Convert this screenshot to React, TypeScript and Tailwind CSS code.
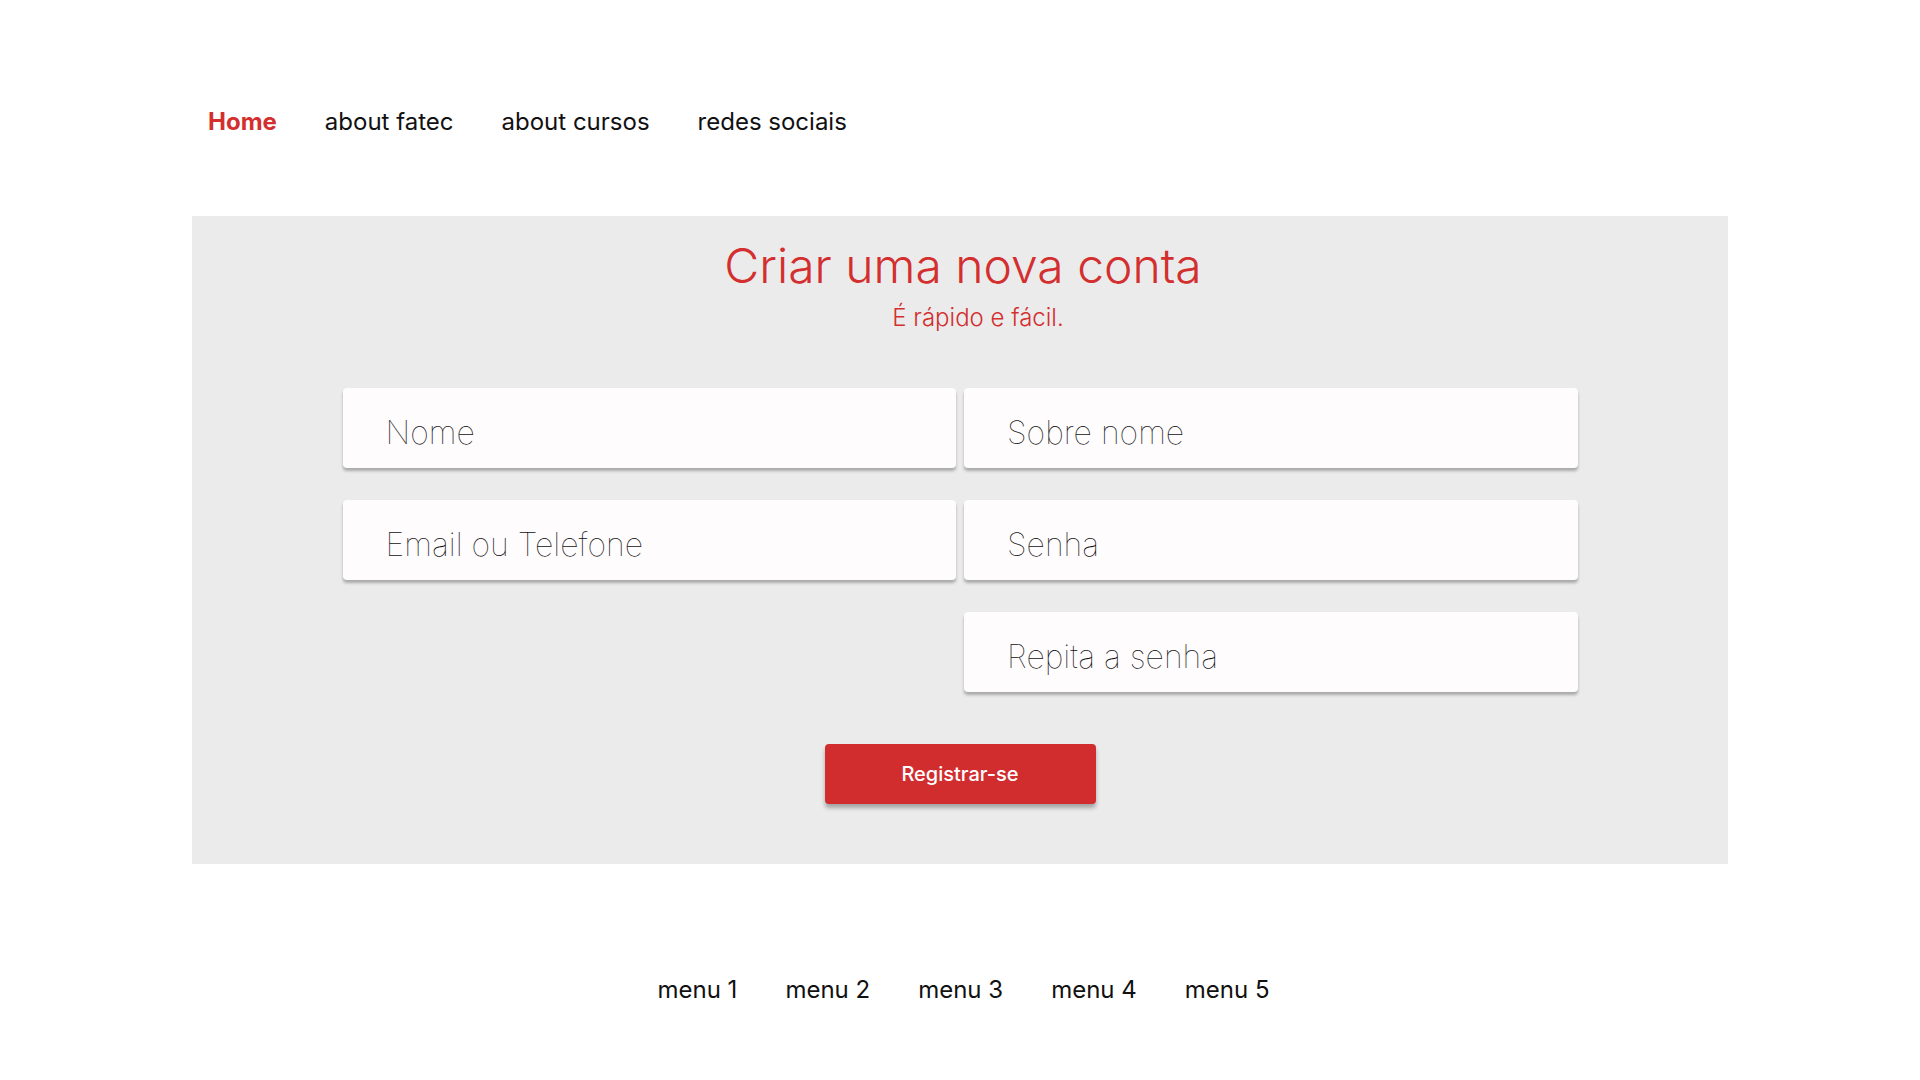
import { useState } from 'react'

const navLinks = ['Home', 'about fatec', 'about cursos', 'redes sociais']
const footerLinks = ['menu 1', 'menu 2', 'menu 3', 'menu 4', 'menu 5']

function Field({ placeholder, type = 'text' }: { placeholder: string; type?: string }) {
  return (
    <input
      type={type}
      placeholder={placeholder}
      className="h-[80px] w-full rounded-[4px] bg-[#fefcfd] pl-[43px] pr-4 pt-[8px] text-[32px] font-thin text-[#111] placeholder:text-[#111] shadow-[0_3px_3px_rgba(0,0,0,0.28)] outline-none"
    />
  )
}

export default function App() {
  const [active] = useState('Home')

  return (
    <div className="min-h-[1080px] bg-white pt-[105px] font-['Inter',sans-serif]">
      {/* top nav */}
      <nav className="mx-auto flex h-[34px] w-[1536px] items-center gap-[48px] pl-[16px]">
        {navLinks.map((l) => (
          <a
            key={l}
            href="#"
            className={l === active ? 'text-[24px] font-bold text-[#d32f2f]' : 'text-[24px] text-[#111]'}
          >
            {l}
          </a>
        ))}
      </nav>

      {/* register card */}
      <section className="mx-auto mt-[77px] flex h-[648px] w-[1536px] flex-col items-center bg-[#ebebeb] pt-[21px]">
        <h1 className="ml-[6px] text-[48px] font-light leading-[58px] text-[#d32f2f]">Criar uma nova conta</h1>
        <p className="ml-[36px] mt-[8px] text-[24px] font-light leading-[30px] text-[#d32f2f]">É rápido e fácil.</p>

        <form className="mt-[55px] grid w-[1235px] grid-cols-2 gap-x-[8px] gap-y-[32px]">
          <Field placeholder="Nome" />
          <Field placeholder="Sobre nome" />
          <Field placeholder="Email ou Telefone" />
          <Field placeholder="Senha" type="password" />
          <div />
          <Field placeholder="Repita a senha" type="password" />
        </form>

        <button
          type="button"
          className="mt-[52px] h-[60px] w-[271px] rounded-[4px] bg-[#d12d2f] text-[20px] font-medium text-white shadow-[0_4px_4px_rgba(0,0,0,0.3)]"
        >
          Registrar-se
        </button>
      </section>

      {/* footer */}
      <footer className="ml-[7px] mt-[109px] flex items-center justify-center gap-[48px]">
        {footerLinks.map((l) => (
          <a key={l} href="#" className="text-[24px] leading-[34px] text-[#111]">
            {l}
          </a>
        ))}
      </footer>
    </div>
  )
}
